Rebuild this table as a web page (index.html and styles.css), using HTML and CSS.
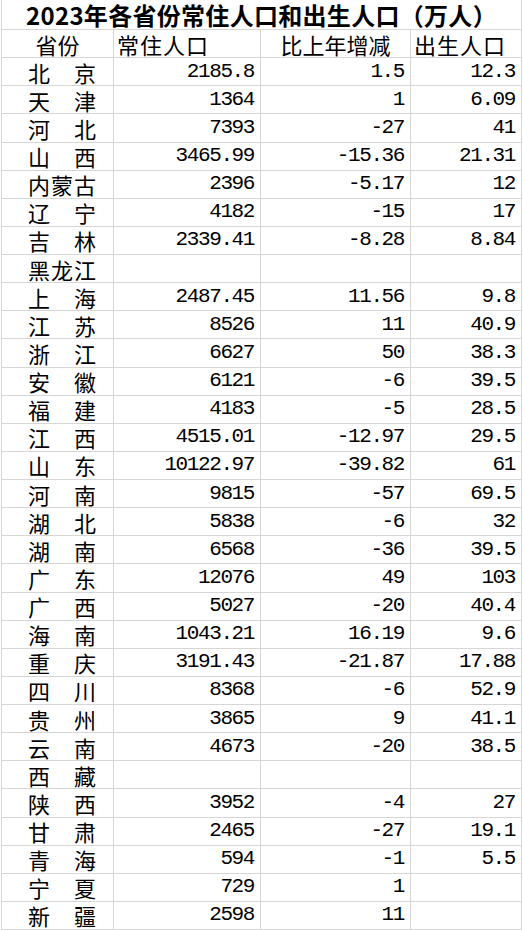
FILE: index.html
```html
<!DOCTYPE html>
<html lang="zh">
<head>
<meta charset="utf-8">
<title>2023年各省份常住人口和出生人口</title>
<link rel="stylesheet" href="styles.css">
</head>
<body>
<div class="sheet">
  <div class="cell title">2023年各省份常住人口和出生人口（万人）</div>

  <div class="cell hd center">省份</div>
  <div class="cell hd left">常住人口</div>
  <div class="cell hd center">比上年增减</div>
  <div class="cell hd left">出生人口</div>

  <div class="cell name">北　京</div><div class="cell num">2185.8</div><div class="cell num">1.5</div><div class="cell num">12.3</div>
  <div class="cell name">天　津</div><div class="cell num">1364</div><div class="cell num">1</div><div class="cell num">6.09</div>
  <div class="cell name">河　北</div><div class="cell num">7393</div><div class="cell num">-27</div><div class="cell num">41</div>
  <div class="cell name">山　西</div><div class="cell num">3465.99</div><div class="cell num">-15.36</div><div class="cell num">21.31</div>
  <div class="cell name">内蒙古</div><div class="cell num">2396</div><div class="cell num">-5.17</div><div class="cell num">12</div>
  <div class="cell name">辽　宁</div><div class="cell num">4182</div><div class="cell num">-15</div><div class="cell num">17</div>
  <div class="cell name">吉　林</div><div class="cell num">2339.41</div><div class="cell num">-8.28</div><div class="cell num">8.84</div>
  <div class="cell name">黑龙江</div><div class="cell num"></div><div class="cell num"></div><div class="cell num"></div>
  <div class="cell name">上　海</div><div class="cell num">2487.45</div><div class="cell num">11.56</div><div class="cell num">9.8</div>
  <div class="cell name">江　苏</div><div class="cell num">8526</div><div class="cell num">11</div><div class="cell num">40.9</div>
  <div class="cell name">浙　江</div><div class="cell num">6627</div><div class="cell num">50</div><div class="cell num">38.3</div>
  <div class="cell name">安　徽</div><div class="cell num">6121</div><div class="cell num">-6</div><div class="cell num">39.5</div>
  <div class="cell name">福　建</div><div class="cell num">4183</div><div class="cell num">-5</div><div class="cell num">28.5</div>
  <div class="cell name">江　西</div><div class="cell num">4515.01</div><div class="cell num">-12.97</div><div class="cell num">29.5</div>
  <div class="cell name">山　东</div><div class="cell num">10122.97</div><div class="cell num">-39.82</div><div class="cell num">61</div>
  <div class="cell name">河　南</div><div class="cell num">9815</div><div class="cell num">-57</div><div class="cell num">69.5</div>
  <div class="cell name">湖　北</div><div class="cell num">5838</div><div class="cell num">-6</div><div class="cell num">32</div>
  <div class="cell name">湖　南</div><div class="cell num">6568</div><div class="cell num">-36</div><div class="cell num">39.5</div>
  <div class="cell name">广　东</div><div class="cell num">12076</div><div class="cell num">49</div><div class="cell num">103</div>
  <div class="cell name">广　西</div><div class="cell num">5027</div><div class="cell num">-20</div><div class="cell num">40.4</div>
  <div class="cell name">海　南</div><div class="cell num">1043.21</div><div class="cell num">16.19</div><div class="cell num">9.6</div>
  <div class="cell name">重　庆</div><div class="cell num">3191.43</div><div class="cell num">-21.87</div><div class="cell num">17.88</div>
  <div class="cell name">四　川</div><div class="cell num">8368</div><div class="cell num">-6</div><div class="cell num">52.9</div>
  <div class="cell name">贵　州</div><div class="cell num">3865</div><div class="cell num">9</div><div class="cell num">41.1</div>
  <div class="cell name">云　南</div><div class="cell num">4673</div><div class="cell num">-20</div><div class="cell num">38.5</div>
  <div class="cell name">西　藏</div><div class="cell num"></div><div class="cell num"></div><div class="cell num"></div>
  <div class="cell name">陕　西</div><div class="cell num">3952</div><div class="cell num">-4</div><div class="cell num">27</div>
  <div class="cell name">甘　肃</div><div class="cell num">2465</div><div class="cell num">-27</div><div class="cell num">19.1</div>
  <div class="cell name">青　海</div><div class="cell num">594</div><div class="cell num">-1</div><div class="cell num">5.5</div>
  <div class="cell name">宁　夏</div><div class="cell num">729</div><div class="cell num">1</div><div class="cell num"></div>
  <div class="cell name">新　疆</div><div class="cell num">2598</div><div class="cell num">11</div><div class="cell num"></div>
</div>
</body>
</html>
```

FILE: styles.css
```css
html, body {
  margin: 0;
  padding: 0;
  background: #ffffff;
}

body {
  font-family: "Noto Sans CJK SC", "Noto Sans", sans-serif;
  color: #000000;
}

.sheet {
  margin-left: 1px;
  width: 521px;
  height: 930px;
  box-sizing: border-box;
  display: grid;
  grid-template-columns: 112px 147px 150px 111px;
  grid-template-rows: 30px repeat(32, 1fr);
  border-left: 1px solid #d6d6d6;
}

.cell {
  box-sizing: border-box;
  border-right: 1px solid #d6d6d6;
  border-bottom: 1px solid #d6d6d6;
  display: flex;
  align-items: center;
  white-space: nowrap;
  font-size: 22px;
  line-height: 24px;
}

.title {
  grid-column: 1 / 5;
  justify-content: center;
  font-weight: bold;
  font-size: 24px;
  line-height: 26px;
  letter-spacing: 0.3px;
}

.hd.center {
  justify-content: center;
}

.hd.left {
  justify-content: flex-start;
  padding-left: 3px;
  letter-spacing: 1px;
}

.name {
  justify-content: center;
  padding-left: 10px;
  letter-spacing: 1px;
}

.num {
  justify-content: flex-end;
  padding-right: 6px;
  font-family: "Liberation Mono", "DejaVu Sans Mono", monospace;
  font-size: 21px;
  letter-spacing: -1.4px;
}
```
